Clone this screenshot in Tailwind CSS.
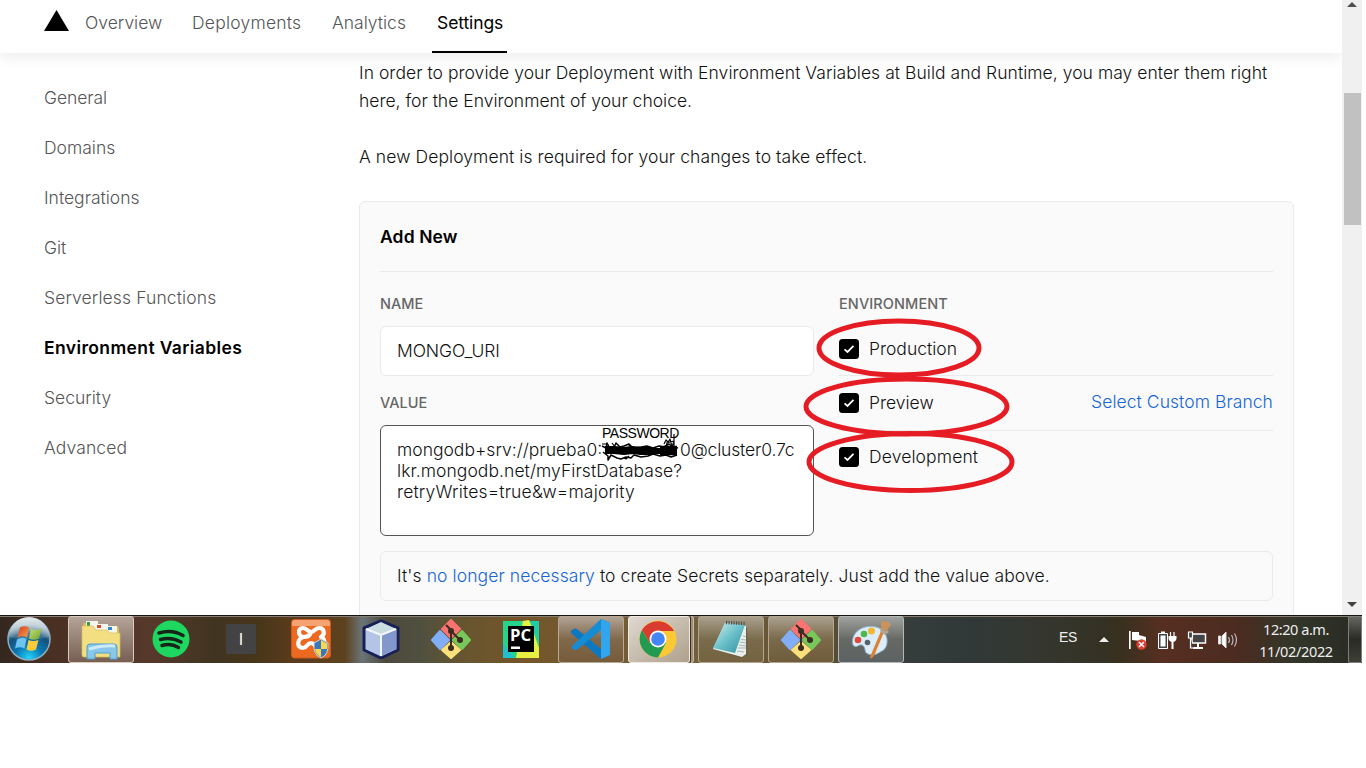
<!DOCTYPE html>
<html lang="en">
<head>
<meta charset="utf-8">
<title>Environment Variables</title>
<script src="https://cdn.jsdelivr.net/npm/@tailwindcss/browser@4"></script>
</head>
<body class="bg-white overflow-hidden">
<div class="relative flex flex-col w-[1362px] h-[663px] overflow-hidden font-['Inter',sans-serif] text-[17.5px] font-light text-[#111]">
  <div class="flex h-[615px] overflow-hidden">
    <div class="flex flex-col w-[1342px] h-[615px] overflow-hidden">
      <nav class="flex shrink-0 h-[53px] pl-[44px] text-[#555] shadow-[0_4px_14px_rgba(0,0,0,0.08)] leading-[46px]">
        <svg class="w-[25px] h-[22px] mt-[10px] mr-[16px]" viewBox="0 0 25 22"><path d="M12.5 0 25 21H0z" fill="#000"/></svg>
        <a class="w-[107px]">Overview</a>
        <a class="w-[140px] tracking-[0.22px]">Deployments</a>
        <a class="w-[100px]">Analytics</a>
        <a class="w-[75px] pl-[5px] h-[53px] border-b-2 border-black text-black font-normal tracking-[-0.1px]">Settings</a>
      </nav>
      <div class="flex">
        <aside class="w-[359px] shrink-0 pl-[44px] pt-[20px] leading-[50px] text-[#555]">
          <div class="tracking-[-0.1px]">General</div>
          <div>Domains</div>
          <div>Integrations</div>
          <div>Git</div>
          <div class="tracking-[0.11px]">Serverless Functions</div>
          <div class="text-black font-semibold tracking-[0.38px]">Environment Variables</div>
          <div>Security</div>
          <div class="tracking-[0.1px]">Advanced</div>
        </aside>
        <main class="w-[935px] shrink-0 pt-[6px] whitespace-nowrap">
          <p class="leading-[28px]"><span class="tracking-[0.04px]">In order to provide your Deployment with Environment Variables at Build and Runtime, you may enter them right</span><br>here, for the Environment of your choice.</p>
          <p class="leading-[28px] mt-[28px] tracking-[0.08px]">A new Deployment is required for your changes to take effect.</p>
          <section class="mt-[30px] h-[460px] border border-[#eaeaea] rounded-[6px] bg-[#fafafa] px-[20px]">
            <h2 class="h-[70px] leading-[70px] border-b border-[#eaeaea] font-semibold text-black tracking-[0.12px]">Add New</h2>
            <div class="flex gap-[25px]">
              <div class="w-[434px]">
                <div class="h-[54px] pt-[20px] leading-[24px] text-[14.5px] font-medium text-[#666]">NAME</div>
                <div class="h-[50px] leading-[48px] rounded-[6px] border border-[#eaeaea] bg-white pl-[16px] tracking-[-0.1px]">MONGO_URI</div>
                <div class="h-[49px] pt-[15px] leading-[24px] text-[14.5px] font-medium text-[#666]">VALUE</div>
                <div class="h-[111px] rounded-[6px] border border-[#555] bg-white pl-[16px] pt-[13px] leading-[21px]">
                  <div class="flex"><span class="w-[206px]">mongodb+srv://prueba0:</span><span class="w-[77px]"></span><span class="tracking-[-0.15px]">0@cluster0.7c</span></div>
                  <div class="tracking-[0.06px]">lkr.mongodb.net/myFirstDatabase?</div>
                  <div class="tracking-[0.17px]">retryWrites=true&amp;w=majority</div>
                </div>
              </div>
              <div class="w-[434px]">
                <div class="h-[51px] pt-[20px] leading-[24px] text-[14.5px] font-medium text-[#666] tracking-[0.1px]">ENVIRONMENT</div>
                <div class="flex items-center h-[53px] border-b border-[#eaeaea]">
                  <svg class="w-[20px] h-[20px] mr-[10px]" viewBox="0 0 20 20"><rect width="20" height="20" rx="3.5"/><path d="m5.5 10.3 3 2.700 6-6.200" fill="none" stroke="#fff" stroke-width="1.800"/></svg>Production
                </div>
                <div class="flex items-center h-[55px] border-b border-[#eaeaea]">
                  <svg class="w-[20px] h-[20px] mr-[10px]" viewBox="0 0 20 20"><rect width="20" height="20" rx="3.5"/><path d="m5.5 10.3 3 2.700 6-6.200" fill="none" stroke="#fff" stroke-width="1.800"/></svg>Preview<span class="ml-auto text-[#1565d8] pb-[2px] tracking-[0.06px]">Select Custom Branch</span>
                </div>
                <div class="flex items-center h-[52px]">
                  <svg class="w-[20px] h-[20px] mr-[10px]" viewBox="0 0 20 20"><rect width="20" height="20" rx="3.5"/><path d="m5.5 10.3 3 2.700 6-6.200" fill="none" stroke="#fff" stroke-width="1.800"/></svg><span class="pt-[1px] tracking-[0.12px]">Development</span>
                </div>
              </div>
            </div>
            <div class="mt-[15px] h-[50px] leading-[48px] rounded-[6px] border border-[#eaeaea] pl-[16px] tracking-[0.09px]">It's <span class="text-[#1565d8]">no longer necessary</span> to create Secrets separately. Just add the value above.</div>
          </section>
        </main>
      </div>
    </div>
    <div class="flex flex-col items-center justify-between w-[20px] bg-[#f0f0f0] pt-[2px] pb-[8px]">
      <svg class="w-[10px] h-[5px]" viewBox="0 0 10 5"><path d="M0 5 5 0l5 5z" fill="#505050"/></svg>
      <div class="w-[17px] h-[132px] bg-[#c1c1c1] mt-[86px] mb-auto"></div>
      <svg class="w-[10px] h-[5px]" viewBox="0 0 10 5"><path d="M0 0h10L5 5z" fill="#404040"/></svg>
    </div>
  </div>

  <!-- Annotations over the form -->
  <svg class="absolute left-0 top-0 w-[1362px] h-[663px] pointer-events-none" viewBox="0 0 1362 663" fill="none">
    <g stroke="#e51c24" stroke-width="5">
      <ellipse cx="899" cy="348" rx="80" ry="27"/>
      <ellipse cx="906.500" cy="406.500" rx="100.500" ry="27.500"/>
      <ellipse cx="910.500" cy="462" rx="101.500" ry="28.500"/>
    </g>
    <g stroke="#000" stroke-linejoin="round">
      <path stroke-width="8" d="M605 450h9l10 1 8-1 9 1h11"/>
      <path stroke-width="6" d="M650 451h12"/>
      <path stroke-width="9.500" d="M660 450.500h17"/>
      <path stroke-width="1.500" d="M602 446l4 2 1-5 5 9 4-9 4 4 4-1 5-2 4 4 8-1 6-1 6 2 6-2 5 1 5-3 4 3 5 1M603 452l5 4v4l3-5 6 3 4 1 5-2 5 1 3-3 7 2 7-1 5-2 7 2 6-1 5 2 6-2"/>
      <path stroke-width="1.200" d="M602 444h6M612 443l3 4M628 444l3 3M624 458l2 1 3-3M664 444l2-4 2 2M665 447l5-8 2 8 2-6M674 438v9M666 443l8-2M674 434v6"/>
    </g>
  </svg>
  <div class="absolute left-[602px] top-[424px] text-[14px] leading-[18px] font-normal font-['Liberation_Sans',sans-serif] text-black tracking-[-0.48px]">PASSWORD</div>

  <footer class="flex h-[48px] shrink-0 border-t border-[#17130f] bg-[linear-gradient(90deg,#34271e_0,#493023_50px,#57392c_150px,#403420_215px,#493619_260px,#5a3b1c_290px,#5d421f_345px,#6a7478_362px,#4c493d_385px,#505040_420px,#68552f_465px,#745529_520px,#71603d_690px,#625233_810px,#343c3c_915px,#303938_970px,#353730_1030px,#343326_1090px,#37301f_1120px,#562f21_1160px,#4b2b20_1240px,#333629_1290px,#292b24_1362px)] shadow-[inset_0_1px_0_#887d72] font-normal">
    <svg class="w-[68px] h-[47px] shrink-0" viewBox="0 0 68 47">
      <defs>
        <radialGradient id="orb" cx=".5" cy=".95" r=".8"><stop offset="0" stop-color="#25d3f7"/><stop offset=".4" stop-color="#0878b4"/><stop offset=".75" stop-color="#185179"/><stop offset="1" stop-color="#8ea9b7"/></radialGradient>
        <linearGradient id="shine" x2="0" y2="1"><stop offset="0" stop-color="#fff" stop-opacity=".75"/><stop offset="1" stop-color="#fff" stop-opacity=".1"/></linearGradient>
        <linearGradient id="red" x2="1" y2="1"><stop offset="0" stop-color="#d83c18"/><stop offset="1" stop-color="#f6a050"/></linearGradient>
        <linearGradient id="green" x2="1" y2="1"><stop offset="0" stop-color="#c8e07a"/><stop offset="1" stop-color="#6ba52c"/></linearGradient>
      </defs>
      <circle cx="29" cy="23" r="21" fill="url(#orb)" stroke="#8caec0" stroke-width="1.500"/>
      <path d="M9 21a20 20 0 0 1 40 0q-20 5-40 0z" fill="url(#shine)"/>
      <path d="M20 11.500q4.500-2.500 9 0l-2 10q-4.500-2.500-9.500 0z" fill="url(#red)"/>
      <path d="M31 13q5 2 10.500-.5l-2.500 10q-5 2.500-10 0z" fill="url(#green)"/>
      <path d="M17 23.500q5-3 9.500-.5L24.500 32.500q-4.500-2.500-9.500 0z" fill="#6fc3ef"/>
      <path d="M28.500 24q5 2 10 0l-2.500 9.500q-5 2.500-9.500 0z" fill="#fccb3a"/>
    </svg>
    <div class="flex gap-[4px] shrink-0">
      <div class="flex items-center justify-center w-[66px] h-[47px] rounded-[3px] border border-[#dacbc0] bg-linear-to-b from-[#b5a49a] to-[#775f52]">
        <svg class="w-[42px] h-[42px]" viewBox="0 0 42 42">
          <path d="M3 4h9l2 3h22q3 0 3 3v27H4z" fill="#d8bd54"/>
          <path d="M6 2h12v8H6zM15 5h13v8H15zM26 7h11v8H26z" fill="#f4f5ee"/>
          <path d="M7 3h3v4H7z" fill="#389a43"/><path d="M17 6h4v3h-4z" fill="#d94b2f"/><path d="M28 8h4v3h-4z" fill="#3387c5"/>
          <path d="M2 7h11l3 4h11l3 3h10v24H4q-2 0-2-2z" fill="#f3df82" stroke="#d5bd58" stroke-width=".7"/>
          <path d="M7 40V28q0-3 3-3h24q3 0 3 3v12h-7v-6H15v6z" fill="#88c7e9" stroke="#4f9dce"/>
          <path d="M9 30q13-4 26-3" stroke="#cceaf8" stroke-width="3" fill="none"/>
        </svg>
      </div>
      <div class="flex items-center justify-center w-[66px]">
        <svg class="w-[38px] h-[38px] mb-[2px]" viewBox="0 0 38 38"><circle cx="19" cy="19" r="18.500" fill="#1ed760"/><path d="M7 13q13-4 24 2.500M8.500 19.500q11-3 20.500 2.500M10 25.500q9-2.500 16.500 2" fill="none" stroke="#16251a" stroke-width="3.500" stroke-linecap="round"/></svg>
      </div>
      <div class="flex items-center justify-center w-[66px]">
        <div class="w-[30px] h-[30px] mb-[2px] bg-[#434343] rounded-[1px] text-center text-[16px] leading-[31px] text-white font-['Liberation_Sans',sans-serif]">I</div>
      </div>
      <div class="flex items-center justify-center w-[66px]">
        <svg class="w-[40px] h-[40px] overflow-visible mb-[1px]" viewBox="0 0 40 40">
          <rect x=".5" y=".5" width="39" height="38.500" rx="3" fill="#ee6920" stroke="#c85a22"/><path d="M1 4q0-3 3-3h32q3 0 3 3v3H1z" fill="#f5a471"/>
          <path d="M13 18C7 18 6 9 12 9c4 0 5 4 8 4s4-4 8-4c6 0 6 7 2 9 5 2 4 11-2 11-4 0-4-5-8-5s-4 5-8 5c-7 0-6-10 1-11 3 0 6-2 7-5" fill="none" stroke="#fff" stroke-width="4.200" stroke-linecap="round" stroke-linejoin="round"/>
          <path d="m30 20 7 4q1 12-7 15-8-3-7-15z" fill="#3b78bb" stroke="#d6d7ca"/><path d="m30 21 6 3.500v5.500h-6zM24 30h6v8q-5-2-6-8z" fill="#f6d653"/>
        </svg>
      </div>
      <div class="flex items-center justify-center w-[66px]">
        <svg class="w-[40px] h-[40px] mb-[2px]" viewBox="0 0 40 40">
          <path d="m20 2 17 7v22l-17 8-17-8V9z" fill="#b5c9ea" stroke="#192056" stroke-width="3" stroke-linejoin="round"/>
          <path d="m20 3 15 7-15 6-15-6z" fill="#c9dde0"/><path d="m5 10 15 6v21L5 30z" fill="#b4c4e6"/><path d="m35 10-15 6v21l15-7z" fill="#8297cb"/><path d="m5 10 15 6 15-6M20 16v21" stroke="#f2f7fc" stroke-width="2" fill="none"/>
        </svg>
      </div>
      <div class="flex items-center justify-center w-[66px]">
        <svg class="w-[40px] h-[40px] mb-[2px]" viewBox="0 0 40 40">
          <g stroke-width="2" stroke-linejoin="round"><path d="m20 1 9 9-9 9-9-9z" fill="#fb7373" stroke="#fb7373"/><path d="m9 12 9 9-9 9-8-9z" fill="#81aef6" stroke="#81aef6"/><path d="m31 12 8 9-8 9-9-9z" fill="#78c75a" stroke="#78c75a"/><path d="m20 23 9 8-9 8-9-8z" fill="#fce07b" stroke="#fce07b"/></g>
          <path d="M15 6l5 5v17M20 12l9 9" stroke="#3b2d20" stroke-width="2" fill="none"/><g fill="#3b2d20"><circle cx="20" cy="12" r="3"/><circle cx="29" cy="21" r="3"/><circle cx="20" cy="29" r="3"/></g>
        </svg>
      </div>
      <div class="flex items-center justify-center w-[66px]">
        <svg class="w-[38px] h-[38px] mb-[2px]" viewBox="0 0 38 38">
          <path d="M1 1h36v37H1z" fill="#25d38c"/><path d="m21 1 6-1 2 5 8 23v10H14z" fill="#e8ef43"/><path d="M29 1h8v22z" fill="#20cba9"/><path d="M1 24 12 38H1z" fill="#21bed0"/>
          <path d="M6 6h26v26H6z" fill="#000"/><text x="8" y="20.500" fill="#fff" font-family="Open Sans" font-weight="700" font-size="15.500" textLength="21" lengthAdjust="spacingAndGlyphs">PC</text><path d="M9 26.500h9v2.500H9z" fill="#fff"/>
        </svg>
      </div>
      <div class="flex items-center justify-center w-[66px] h-[47px] rounded-[3px] border border-[#b8a894] bg-linear-to-b from-[#b1a394] via-[#80684b] to-[#765c3a]">
        <svg class="w-[42px] h-[42px] mb-[2px]" viewBox="0 0 42 42"><path d="m31 1 9 4v32l-9 4L1 15q-1-2 1-3l2-1q2-1 3 0l24 20z" fill="#0c78c2"/><path d="m31 1-29 27q-1 2 1 3l2 1q2 0 3-1l23-19z" fill="#168cd3"/><path d="m31 1 9 4v32l-9 4z" fill="#31a5ee"/></svg>
      </div>
      <div class="flex w-[66px] h-[47px]">
        <div class="flex items-center justify-center w-[62px] rounded-[3px] border border-[#f0e9df] bg-linear-to-br from-[#e0d9d1] to-[#aea08b]">
          <svg class="w-[38px] h-[38px] mb-[2px] mr-[2px]" viewBox="0 0 38 38"><circle cx="19" cy="19" r="18.500" fill="#fcc934"/><path d="M3 10a18.500 18.500 0 0 0 16 27.500L27 23 11 23z" fill="#229a50"/><path d="M3 10 11 23 19 11h16A18.500 18.500 0 0 0 3 10z" fill="#d93b30"/><circle cx="19" cy="19" r="8.500" fill="#fff"/><circle cx="19" cy="19" r="6.800" fill="#4285f4"/></svg>
        </div>
        <div class="w-[4px] border-r border-y border-l border-l-[#3b3020] rounded-r-[3px] border-[#c9bba7] bg-[#a09078]"></div>
      </div>
      <div class="flex items-center justify-center w-[66px] h-[47px] rounded-[3px] border border-[#b2a68e] bg-linear-to-b from-[#a9a08d] via-[#796b4b] to-[#746340]">
        <svg class="w-[40px] h-[40px] mb-[2px]" viewBox="0 0 40 40">
          <defs><linearGradient id="note" x2="1" y2="1"><stop offset="0" stop-color="#d4eef0"/><stop offset=".5" stop-color="#6ac0c9"/><stop offset="1" stop-color="#338e9e"/></linearGradient></defs>
          <path d="m14 6 22 3 1 27-5 3-14-2z" fill="#716142"/><path d="m14 4 21 3v28l-4 3L2 30z" fill="#e8f0ed"/><path d="M14 4 34 6 24 34 2 29z" fill="url(#note)"/><path d="m32 17 3 .5m-5 3 5 .5m-6 2 6 1m-7 2 7 1m-8 2h8m-9 3 7 1" stroke="#9aa5a1" stroke-width=".8"/><path d="M15 3.500l20 1" stroke="#4e5754" stroke-width="3.500" stroke-dasharray="1.200 1.300"/>
        </svg>
      </div>
      <div class="flex items-center justify-center w-[66px] h-[47px] rounded-[3px] border border-[#b2a68e] bg-linear-to-b from-[#aaa08e] via-[#7a694a] to-[#6f5c3b]">
        <svg class="w-[40px] h-[40px] mb-[2px]" viewBox="0 0 40 40">
          <g stroke-width="2" stroke-linejoin="round"><path d="m20 1 9 9-9 9-9-9z" fill="#fb7373" stroke="#fb7373"/><path d="m9 12 9 9-9 9-8-9z" fill="#81aef6" stroke="#81aef6"/><path d="m31 12 8 9-8 9-9-9z" fill="#78c75a" stroke="#78c75a"/><path d="m20 23 9 8-9 8-9-8z" fill="#fce07b" stroke="#fce07b"/></g>
          <path d="M15 6l5 5v17M20 12l9 9" stroke="#3b2d20" stroke-width="2" fill="none"/><g fill="#3b2d20"><circle cx="20" cy="12" r="3"/><circle cx="29" cy="21" r="3"/><circle cx="20" cy="29" r="3"/></g>
        </svg>
      </div>
      <div class="flex items-center justify-center w-[66px] h-[47px] rounded-[3px] border border-[#b6b8b6] bg-linear-to-b from-[#a0a2a0] via-[#666963] to-[#5c6264]">
        <svg class="w-[40px] h-[40px]" viewBox="0 0 40 40">
          <path d="M2 25C-1 12 13 4 25 7c13 3 14 20 6 24-6 3-7 5-14 3-5-2-1-7-6-9-4-1-5 4-9 0z" fill="#dcecf8" stroke="#91b5d2"/>
          <circle cx="7" cy="20" r="3.300" fill="#dd493b"/><circle cx="13" cy="14" r="3.300" fill="#4eb84b"/><circle cx="20.500" cy="11" r="3.500" fill="#f2b834"/><circle cx="16.500" cy="22.500" r="2.800" fill="#56626b"/>
          <path d="m30 11-11 26q0 2 2 1l2-2L33 12z" fill="#dc8132"/><path d="m29 11 2-6 3 3 4 4-4 3z" fill="#a9a6a0"/><path d="m30 1 8 1 2 3-5 7-5-3z" fill="#c9945b"/>
        </svg>
      </div>
    </div>
    <div class="flex shrink-0 ml-[155px] text-[#eee] font-['Noto_Sans',sans-serif]">
      <div class="w-[40px] font-['Liberation_Sans',sans-serif] text-[14px] leading-[43px] tracking-[-0.4px]">ES</div>
      <svg class="w-[150px] h-[47px]" viewBox="1099 616 150 47">
        <path d="m1099 642 5-5 5 5z" fill="#eee"/>
        <g fill="#fff"><path d="M1129 631h1.700v18h-1.700zM1132 632h7v3l7 2v5l-6-1-8-1z"/></g>
        <circle cx="1141.500" cy="644.500" r="5.200" fill="#db3e2e"/><path d="m1139 642 5 5m0-5-5 5" stroke="#fff" stroke-width="1.500"/>
        <path d="M1158.500 633.500h9v15h-9z" fill="#444" stroke="#fff"/><path d="M1160.500 635.500h5v11h-5zM1161 631.500h4v2h-4z" fill="#fff"/><path d="M1170.500 632v4m3.500-4v4" stroke="#fff" stroke-width="1.200"/><path d="M1168.500 636h8v3q-1 3-3 3v7h-2v-7q-2 0-3-3z" fill="#fff"/>
        <path d="M1192 634h13.500v9H1192z" fill="#444" stroke="#fff" stroke-width="1.500"/><path d="M1198 643v4m-5 1h10" stroke="#fff" stroke-width="2"/><path d="M1188.500 632h4v6h-4zM1190.500 638v10h3" fill="#444" stroke="#fff" stroke-width="1.200"/>
        <path d="M1218.500 636h2v8h-2zM1222 636l4-4v16l-4-4z" fill="#fff" stroke="#ddd"/><path d="M1228.500 637q2 3 0 6M1231.500 635q3 5 0 10M1234.500 633.500q4 6.500 0 13" fill="none" stroke="#bbb" stroke-width="1.200"/>
      </svg>
      <div class="w-[94px] text-center text-[14.500px] leading-[22px] pt-[2px] tracking-[-0.35px]"><div class="tracking-[-0.45px]">12:20 a.m.</div><div>11/02/2022</div></div>
      <div class="w-[14px] h-[47px] ml-[5px] border border-[#7c7e78] bg-linear-to-b from-[#65665f] via-[#292a24] to-[#3e4036] rounded-[1px]"></div>
    </div>
  </footer>
</div>
</body>
</html>
